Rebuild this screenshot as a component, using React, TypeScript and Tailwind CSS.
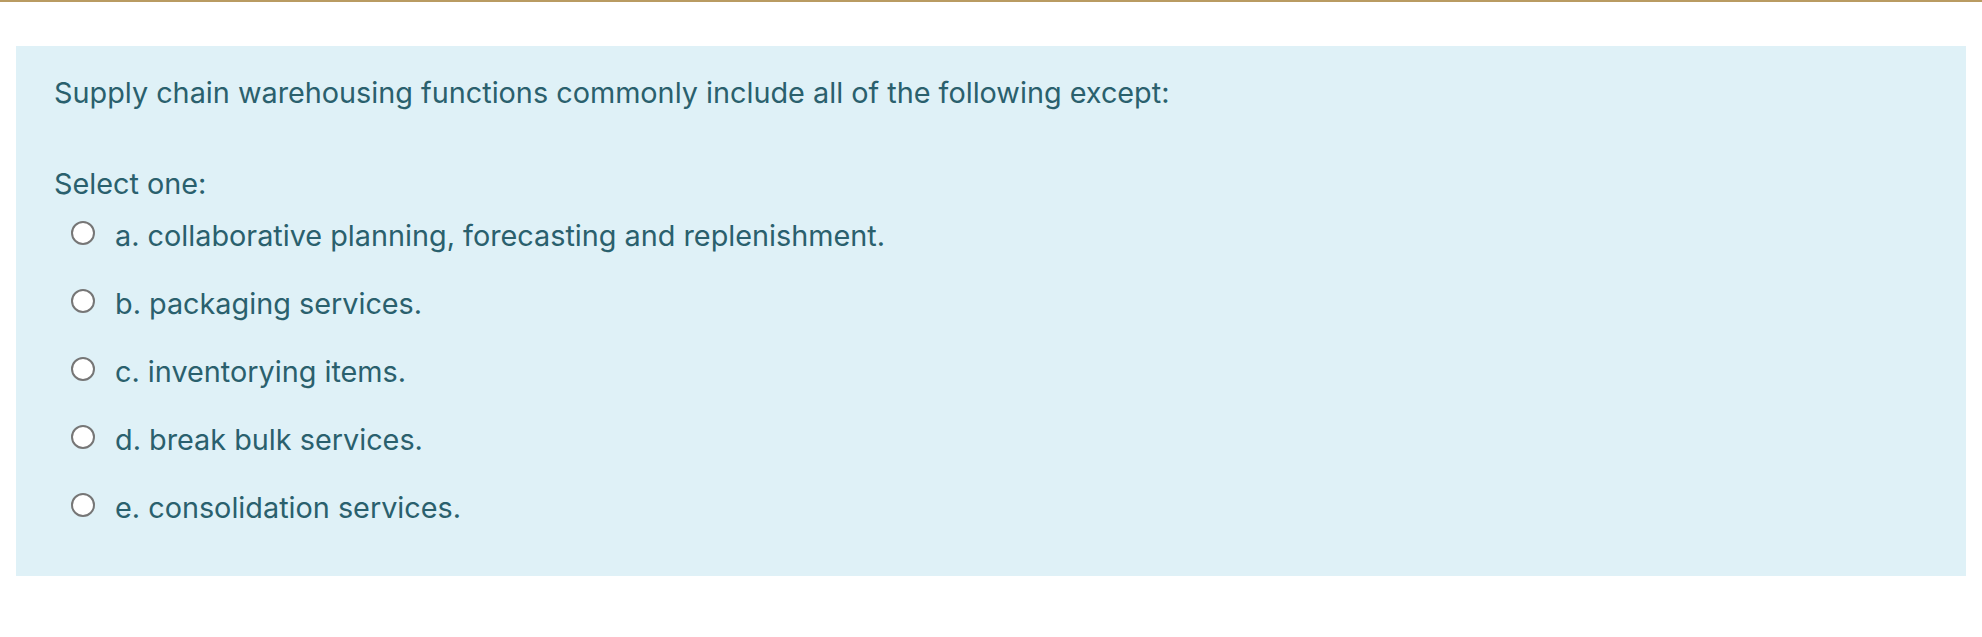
import React from 'react';

const options = [
  'a. collaborative planning, forecasting and replenishment.',
  'b. packaging services.',
  'c. inventorying items.',
  'd. break bulk services.',
  'e. consolidation services.',
];

export default function App() {
  return (
    <div className="min-h-[637px] bg-white" style={{ fontFamily: "Inter, 'Noto Sans', sans-serif" }}>
      <div className="h-[2px] bg-[#b99b62]" />
      <div className="px-4 pt-[44px]">
        <div className="bg-[#dff1f7] pl-[38px] pr-8 pt-[27px] pb-[51px] text-[#2a606d]">
          <p className="text-[28.8px] leading-[40px]">
            Supply chain warehousing functions commonly include all of the following except:
          </p>
          <p className="mt-[51px] text-[28.8px] leading-[40px]">Select one:</p>
          <div className="mt-[9px] flex flex-col gap-[28px]">
            {options.map((opt) => (
              <label key={opt} className="flex h-[40px] items-center">
                <span className="ml-[17px] mr-[20px] block h-[24px] w-[24px] shrink-0 rounded-full border-2 border-[#767676] bg-white" />
                <span className="mt-[5px] text-[28.8px] leading-[40px]">{opt}</span>
              </label>
            ))}
          </div>
        </div>
      </div>
    </div>
  );
}
